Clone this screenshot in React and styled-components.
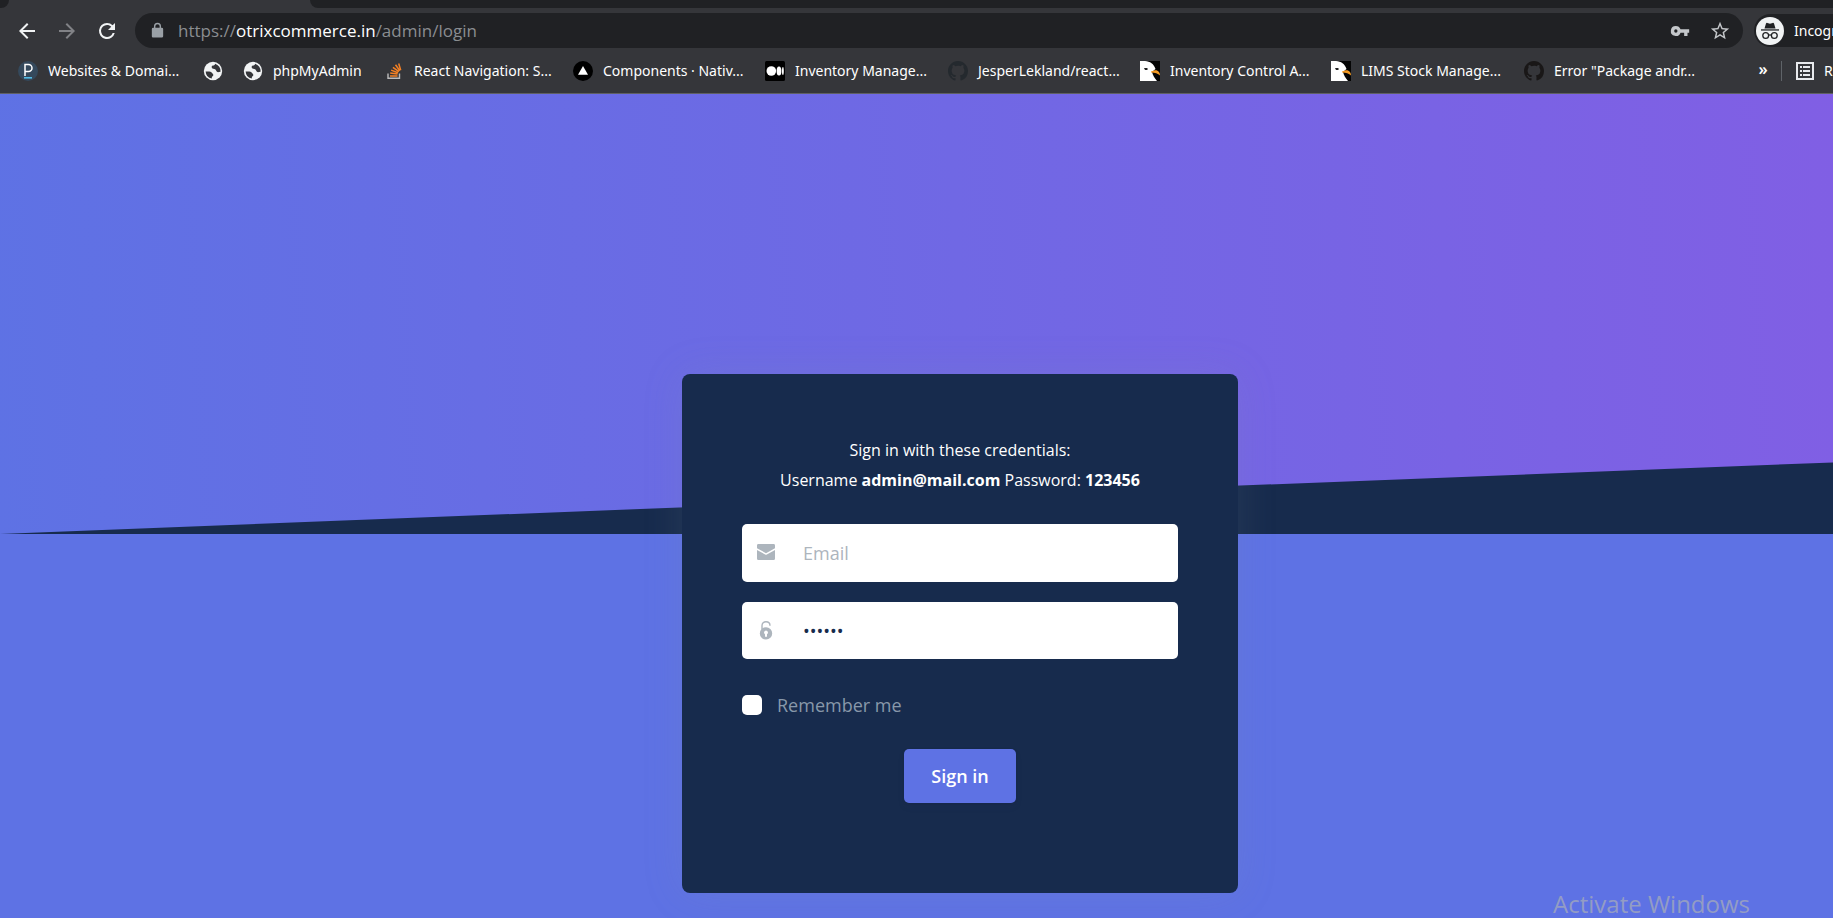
import React from "react";
import styled, { createGlobalStyle } from "styled-components";

const GlobalStyle = createGlobalStyle`
  *, *::before, *::after { box-sizing: border-box; }
  body {
    margin: 0;
    background: #5e72e4;
    font-family: "Open Sans", "Noto Sans", sans-serif;
    overflow: hidden;
  }
  button, input { font-family: inherit; }
`;

/* The window runs past the right edge of the screen. */
const BrowserWindow = styled.div`
  display: flex;
  flex-direction: column;
  width: calc(100% + 87px);
  height: 100vh;
`;

/* ---------- browser chrome ---------- */

const Chrome = styled.header`
  flex: none;
  background: #35363a;
  border-bottom: 1px solid #5f6063;
  font-family: "Noto Sans", "Open Sans", sans-serif;
`;

const TabStrip = styled.div`
  display: flex;
  justify-content: space-between;
  height: 8px;
  background: #35363a;
`;

const TabEdge = styled.div`
  width: 9px;
  background: #202124;
  border-bottom-right-radius: 8px;
`;

const TabRest = styled.div`
  width: calc(100% - 310px);
  background: #202124;
  border-bottom-left-radius: 8px;
`;

const Toolbar = styled.div`
  display: flex;
  align-items: center;
  height: 45px;
  padding-left: 15px;
`;

const NavButton = styled.button`
  display: flex;
  flex: none;
  width: 24px;
  height: 24px;
  margin-right: 16px;
  padding: 0;
  border: 0;
  background: none;
  color: ${(p) => (p.disabled ? "#818286" : "#f1f3f4")};
`;

const Omnibox = styled.div`
  display: flex;
  flex: 1;
  align-items: center;
  height: 35px;
  padding: 0 13px 0 14px;
  border-radius: 18px;
  background: #202124;
  color: #9aa0a6;
`;

const Url = styled.a`
  flex: 1;
  margin-left: 12px;
  color: #8a8d91;
  font-family: "Open Sans", "Noto Sans", sans-serif;
  font-size: 17px;
  line-height: 24px;
  text-decoration: none;
  white-space: nowrap;

  span { color: #fff; }
`;

const OmniButton = styled.button`
  display: flex;
  width: 20px;
  height: 20px;
  margin-left: 20px;
  padding: 0;
  border: 0;
  background: none;
  color: #c4c7ca;
`;

const Incognito = styled.div`
  display: flex;
  flex: none;
  align-items: center;
  gap: 10px;
  width: 166px;
  height: 33px;
  margin-left: 11px;
  padding-left: 2px;
  border-radius: 17px;
  background: #202124;
  color: #fff;
  font-size: 14px;
`;

const BookmarkBar = styled.nav`
  display: flex;
  align-items: center;
  height: 40px;
  padding: 0 0 4px 18px;
`;

const BookmarkLink = styled.a`
  display: flex;
  flex: none;
  align-items: center;
  gap: 10px;
  width: ${(p) => p.$width}px;
  height: 24px;
  color: #fff;
  font-size: 14px;
  line-height: 20px;
  text-decoration: none;
  white-space: nowrap;

  svg { flex: none; }
`;

const Overflow = styled.button`
  display: flex;
  justify-content: center;
  width: 20px;
  margin-left: auto;
  padding: 0 0 4px;
  border: 0;
  background: none;
  color: #fff;
  font-size: 16px;
  font-weight: 600;
  line-height: 20px;
`;

const Divider = styled.span`
  width: 1px;
  height: 20px;
  margin: 0 14px 0 8px;
  background: #5f6368;
`;

/* ---------- page ---------- */

const Page = styled.main`
  position: relative;
  flex: 1;
  min-height: 0;
  background: #5e72e4;
`;

const Hero = styled.div`
  display: flex;
  align-items: flex-end;
  height: 440px;
  background: linear-gradient(87deg, #5e72e4 0, #825ee4 100%);
`;

const Slope = styled.svg`
  display: block;
  width: 100%;
  height: 75px;
`;

const CardRow = styled.div`
  display: flex;
  justify-content: center;
  position: relative;
  margin-top: -160px;
`;

const Card = styled.form`
  display: flex;
  flex-direction: column;
  width: 556px;
  padding: 61px 60px 90px;
  border-radius: 8px;
  background: #172b4d;
  box-shadow: 0 0 40px rgba(136, 152, 170, 0.15);
`;

const Credentials = styled.p`
  margin: 0 0 29px;
  color: #fff;
  font-size: 16px;
  line-height: 30px;
  text-align: center;
`;

const Field = styled.label`
  display: flex;
  align-items: center;
  height: ${(p) => p.$height}px;
  margin-bottom: 20px;
  padding-left: 14px;
  border-radius: 5px;
  background: #fff;
  color: #adb5bd;

  svg { flex: none; }
`;

const TextInput = styled.input`
  flex: 1;
  min-width: 0;
  height: 100%;
  margin-left: 17px;
  padding: 0 10px;
  border: 0;
  outline: 0;
  background: none;
  color: #172b4d;
  font-size: 18px;

  &::placeholder { color: #adb5bd; opacity: 1; }
`;

const Remember = styled.label`
  display: flex;
  align-items: center;
  gap: 15px;
  height: 28px;
  margin-top: 12px;
  color: #8898aa;
  font-size: 18px;
  line-height: 28px;
`;

const Tick = styled.input`
  appearance: none;
  width: 20px;
  height: 20px;
  margin: 0;
  border-radius: 5px;
  background: #fff;
`;

const SignIn = styled.button`
  align-self: center;
  width: 112px;
  height: 54px;
  margin-top: 30px;
  padding: 0;
  border: 0;
  border-radius: 5px;
  background: #5e72e4;
  box-shadow: 0 4px 6px rgba(50, 50, 93, 0.11), 0 1px 3px rgba(0, 0, 0, 0.08);
  color: #fff;
  font-size: 18px;
  font-weight: 600;
`;

/* System notice floating over the page. */
const Watermark = styled.div`
  position: absolute;
  right: 170px;
  bottom: 0;
  color: #939cc4;
  font-size: 24px;
  line-height: 28px;
`;

/* ---------- icons ---------- */

const Svg = ({ size = 20, box = 24, children, ...rest }) => (
  <svg width={size} height={size} viewBox={`0 0 ${box} ${box}`} fill="currentColor" aria-hidden="true" {...rest}>
    {children}
  </svg>
);

const ArrowIcon = ({ forward }) => (
  <Svg size={24}>
    <path
      transform={forward ? "rotate(180 12 12)" : undefined}
      d="M20 11H7.83l5.59-5.59L12 4l-8 8 8 8 1.41-1.41L7.83 13H20z"
    />
  </Svg>
);

const ReloadIcon = () => (
  <Svg size={24}>
    <path d="M17.65 6.35A7.96 7.96 0 0 0 12 4a8 8 0 1 0 7.73 10h-2.08A6 6 0 1 1 12 6c1.66 0 3.14.69 4.22 1.78L13 11h7V4z" />
  </Svg>
);

const LockIcon = () => (
  <Svg size={17}>
    <path d="M18 8h-1V6A5 5 0 0 0 7 6v2H6a2 2 0 0 0-2 2v10c0 1.1.9 2 2 2h12a2 2 0 0 0 2-2V10a2 2 0 0 0-2-2zM9 6a3 3 0 1 1 6 0v2H9z" />
  </Svg>
);

const KeyIcon = () => (
  <Svg size={20}>
    <path d="M12.65 10A6 6 0 0 0 7 6a6 6 0 1 0 5.65 8H17v4h4v-4h2v-4zM7 14a2 2 0 1 1 0-4 2 2 0 0 1 0 4z" />
  </Svg>
);

const StarIcon = () => (
  <Svg size={20}>
    <path
      transform="translate(-1.2 -1.2) scale(1.1)"
      d="M22 9.24l-7.19-.62L12 2 9.19 8.63 2 9.24l5.46 4.73L5.82 21 12 17.27 18.18 21l-1.63-7.03zM12 15.4l-3.76 2.27 1-4.28-3.32-2.88 4.38-.38L12 6.1l1.71 4.04 4.38.38-3.32 2.88 1 4.28z"
    />
  </Svg>
);

const IncognitoIcon = () => (
  <Svg size={28} box={28}>
    <circle cx="14" cy="14" r="14" fill="#f1f3f4" />
    <g fill="#202124">
      <path d="M8.5 11.5 10 6.6c.2-.6.7-.9 1.3-.7l2.7.8 2.7-.8c.6-.2 1.1.1 1.3.7l1.5 4.9z" />
      <path d="M5 12.3h18v1.3H5z" />
    </g>
    <g fill="none" stroke="#202124" strokeWidth="1.3">
      <circle cx="9.7" cy="18.5" r="2.9" />
      <circle cx="18.3" cy="18.5" r="2.9" />
      <path d="M12.6 18.3q1.4-1 2.8 0" />
    </g>
  </Svg>
);

const PleskIcon = () => (
  <Svg box={20}>
    <circle cx="10" cy="10" r="10" fill="#35495c" />
    <path d="M7 15V3.5h3.5a3.5 3.5 0 0 1 0 7H7" fill="none" stroke="#fff" strokeWidth="1.5" />
    <path d="M6 16h8v1.6H6z" fill="#53bce6" />
  </Svg>
);

const GlobeIcon = () => (
  <Svg size={20}>
    <circle cx="12" cy="12" r="11" fill="#f1f3f4" />
    <path
      d="M3.2 12.5c2.3 0 4.7-.2 6.5.8 1 .7 1 2 2.5 2.2v2.6c-1.3.2-1.700 1-1.6 3A9.2 9.2 0 0 1 3.2 12.5zM14.5 3.2c-.1 1.6-1 2-2.6 2.1-1.3.2-1.8 1.5-1.3 2.9.6 1.6 2.6 1.1 4 1.8 1.3.9 1.3 2.7 2.600 3.3 1.3.5 2.4-.6 3.9-.5a9.2 9.2 0 0 0-6.6-9.6z"
      fill="#35363a"
    />
  </Svg>
);

const StackIcon = () => (
  <Svg box={20}>
    <path d="M4 12.5V17.200h11.5V12.5" fill="none" stroke="#bcbbbb" strokeWidth="1.4" />
    <g stroke="#f48024" strokeWidth="1.5">
      <path d="M6 14.900h7.5M6.2 12.1l7.3 1M7.1 9.1l6.9 2.6M8.9 6.3l6 4.4M11.5 3.8l4.3 6M14.7 2.5l2 6.8" />
    </g>
  </Svg>
);

const TriangleIcon = () => (
  <Svg box={20}>
    <circle cx="10" cy="10" r="10" fill="#000" />
    <path d="M10 5l5 8.7H5z" fill="#fff" />
  </Svg>
);

const MediumIcon = () => (
  <Svg box={20}>
    <rect width="20" height="20" rx="1.5" fill="#000" />
    <g fill="#fff">
      <circle cx="6.3" cy="10" r="4.8" />
      <ellipse cx="14" cy="10" rx="2.4" ry="4.5" />
      <ellipse cx="17.9" cy="10" rx=".9" ry="4" />
    </g>
  </Svg>
);

const GithubIcon = ({ tone }) => (
  <Svg box={16}>
    <path
      fill={tone}
      d="M8 0C3.58 0 0 3.58 0 8c0 3.54 2.29 6.53 5.47 7.59.4.07.55-.17.55-.38 0-.19-.01-.82-.01-1.49-2.01.37-2.53-.49-2.69-.94-.09-.23-.48-.94-.82-1.13-.28-.15-.68-.52-.01-.53.63-.01 1.08.58 1.23.82.72 1.21 1.87.87 2.33.66.07-.52.28-.87.51-1.07-1.78-.2-3.64-.89-3.64-3.95 0-.87.31-1.59.82-2.15-.08-.2-.36-1.02.08-2.12 0 0 .67-.21 2.2.82A7.6 7.6 0 0 1 8 3.87c.68 0 1.36.09 2 .26 1.53-1.04 2.2-.82 2.2-.82.44 1.1.16 1.92.08 2.12.51.56.82 1.27.82 2.15 0 3.07-1.87 3.75-3.65 3.95.29.25.54.73.54 1.48 0 1.07-.01 1.93-.01 2.2 0 .21.15.46.55.38A8 8 0 0 0 16 8c0-4.42-3.58-8-8-8z"
    />
  </Svg>
);

const GullIcon = () => (
  <Svg box={20}>
    <rect width="20" height="20" fill="#050505" />
    <path d="M0 0h5c5 .3 9 3 10.500 8L12 11c1 3.5 2.5 6 5 9H0z" fill="#fff" />
    <path d="M11 10.500c2.500-1 4-1.700 5.500-1.200C18.500 10 20 11.500 20 14.500c-2-2-5-2.700-9-2.900z" fill="#f59b23" />
    <path d="M4 7h3.500v2H5z" fill="#222" />
  </Svg>
);

const ReadingListIcon = () => (
  <Svg size={18} box={18}>
    <path d="M1 1h16v16H1z" fill="none" stroke="#e8eaed" strokeWidth="2" />
    <path d="M4 4h2v2H4zM7 4h7v2H7zM4 8h2v2H4zM7 8h7v2H7zM4 12h2v2H4zM7 12h7v2H7z" fill="#e8eaed" />
  </Svg>
);

const MailIcon = () => (
  <Svg size={20} box={20}>
    <path d="M1 2.500C1 1.700 1.500 1 2.300 1h15.400c.8 0 1.300.7 1.300 1.500v2.700l-9 5-9-5z" />
    <path d="M1 6.900l8.600 4.800c.3.100.5.100.8 0L19 6.900v8.600c0 .8-.5 1.500-1.300 1.500H2.300C1.500 17 1 16.300 1 15.500z" />
  </Svg>
);

const OpenLockIcon = () => (
  <Svg size={20} box={20}>
    <path d="M6 8.500V4.700C6 2.300 7.700.8 10 .8s4 1.500 4 3.900" fill="none" stroke="currentColor" strokeWidth="1.400" />
    <path
      fillRule="evenodd"
      d="M10 6.200a6.200 6.200 0 1 1 0 12.400 6.200 6.200 0 0 1 0-12.400zm0 3.300a2 2 0 0 0-1 3.700v2.500h2v-2.500a2 2 0 0 0-1-3.700z"
    />
  </Svg>
);

/* ---------- content ---------- */

const bookmarks = [
  { label: "Websites & Domai...", width: 185, icon: <PleskIcon /> },
  { label: "", width: 40, icon: <GlobeIcon /> },
  { label: "phpMyAdmin", width: 141, icon: <GlobeIcon /> },
  { label: "React Navigation: S...", width: 189, icon: <StackIcon /> },
  { label: "Components · Nativ...", width: 192, icon: <TriangleIcon /> },
  { label: "Inventory Manage...", width: 183, icon: <MediumIcon /> },
  { label: "JesperLekland/react...", width: 192, icon: <GithubIcon tone="#24292e" /> },
  { label: "Inventory Control A...", width: 191, icon: <GullIcon /> },
  { label: "LIMS Stock Manage...", width: 193, icon: <GullIcon /> },
  { label: "Error \"Package andr...", width: 193, icon: <GithubIcon tone="#191717" /> },
];

export default function App() {
  return (
    <>
      <GlobalStyle />
      <BrowserWindow>
        <Chrome>
          <TabStrip>
            <TabEdge />
            <TabRest />
          </TabStrip>
          <Toolbar>
            <NavButton type="button" aria-label="Back"><ArrowIcon /></NavButton>
            <NavButton type="button" aria-label="Forward" disabled><ArrowIcon forward /></NavButton>
            <NavButton type="button" aria-label="Reload"><ReloadIcon /></NavButton>
            <Omnibox>
              <LockIcon />
              <Url href="#login">https://<span>otrixcommerce.in</span>/admin/login</Url>
              <OmniButton type="button" aria-label="Passwords"><KeyIcon /></OmniButton>
              <OmniButton type="button" aria-label="Bookmark this page"><StarIcon /></OmniButton>
            </Omnibox>
            <Incognito><IncognitoIcon />Incognito</Incognito>
          </Toolbar>
          <BookmarkBar aria-label="Bookmarks">
            {bookmarks.map((b, i) => (
              <BookmarkLink key={i} href="#bookmark" $width={b.width} aria-label={b.label || "Bookmark"}>
                {b.icon}
                {b.label}
              </BookmarkLink>
            ))}
            <Overflow type="button" aria-label="More bookmarks">»</Overflow>
            <Divider />
            <BookmarkLink href="#reading" $width={124}><ReadingListIcon />Reading list</BookmarkLink>
          </BookmarkBar>
        </Chrome>
        <Page>
          <Hero>
            <Slope viewBox="0 0 2560 100" preserveAspectRatio="none" aria-hidden="true">
              <polygon points="2560 0 2560 100 0 100" fill="#172b4d" />
            </Slope>
          </Hero>
          <CardRow>
            <Card onSubmit={(e) => e.preventDefault()}>
              <Credentials>
                Sign in with these credentials:
                <br />
                Username <strong>admin@mail.com</strong> Password: <strong>123456</strong>
              </Credentials>
              <Field $height={58}>
                <MailIcon />
                <TextInput type="email" placeholder="Email" aria-label="Email" />
              </Field>
              <Field $height={57}>
                <OpenLockIcon />
                <TextInput type="password" defaultValue="123456" aria-label="Password" />
              </Field>
              <Remember>
                <Tick type="checkbox" />
                Remember me
              </Remember>
              <SignIn type="submit">Sign in</SignIn>
            </Card>
          </CardRow>
          <Watermark>Activate Windows</Watermark>
        </Page>
      </BrowserWindow>
    </>
  );
}
